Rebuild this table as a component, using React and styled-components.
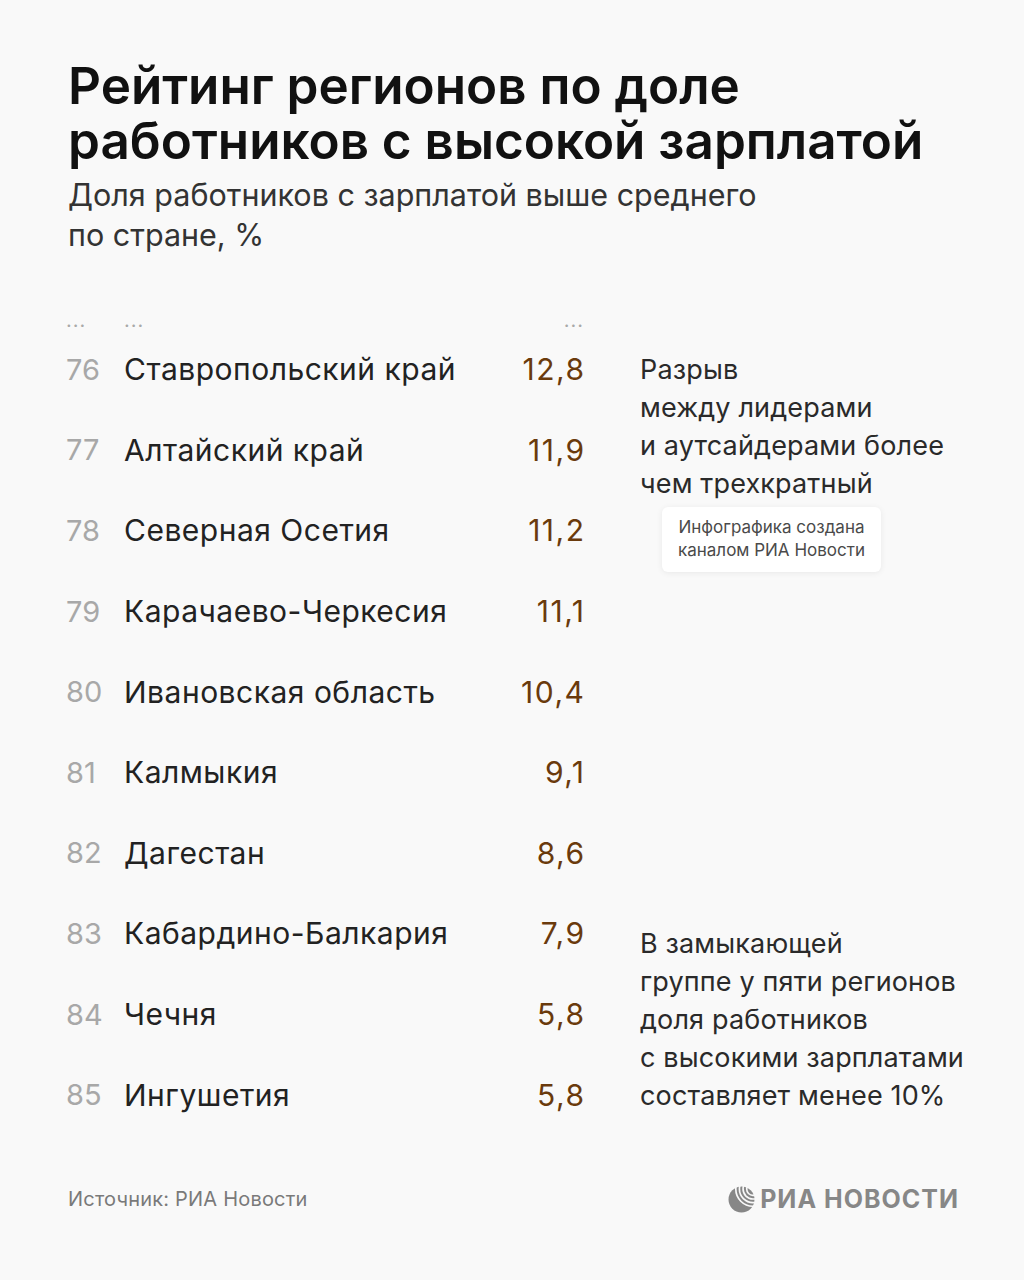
import styled, { createGlobalStyle } from 'styled-components';

const GlobalStyle = createGlobalStyle`
  html, body {
    margin: 0;
    padding: 0;
    background: #f9f9f9;
  }
  body {
    font-family: 'Inter', 'Noto Sans', sans-serif;
    -webkit-font-smoothing: antialiased;
  }
`;

const Page = styled.div`
  width: 1024px;
  height: 1280px;
  box-sizing: border-box;
  padding: 58px 66px 0 68px;
  background: #f9f9f9;
  display: flex;
  flex-direction: column;
`;

const Title = styled.h1`
  margin: 0;
  font-weight: 600;
  font-size: 51.2px;
  line-height: 55px;
  letter-spacing: 0;
  color: #111;
`;

const Subtitle = styled.p`
  margin: 7px 0 0;
  font-weight: 400;
  font-size: 30.5px;
  line-height: 40px;
  letter-spacing: 0;
  color: #333;
`;

const Board = styled.div`
  margin-top: 56px;
  margin-left: -2px;
  display: grid;
  grid-template-columns: 58px 400px 60px 56px 1fr;
  grid-template-rows: 18px repeat(10, 80.6px);
  align-items: center;
`;

const Dots = styled.span`
  grid-column: ${p => p.$col};
  justify-self: ${p => (p.$right ? 'end' : 'start')};
  font-size: 20px;
  line-height: 18px;
  color: #a9a9a9;
  letter-spacing: 1px;
`;

const Rank = styled.span`
  grid-column: 1;
  font-size: 29px;
  letter-spacing: 0;
  color: #a8a8a8;
`;

const Region = styled.span`
  grid-column: 2;
  font-size: 30px;
  letter-spacing: 0.5px;
  color: #222;
  white-space: nowrap;
`;

const Value = styled.span`
  grid-column: 3;
  justify-self: end;
  font-size: 30px;
  letter-spacing: 1.5px;
  margin-right: -1.5px;
  color: #6a3a0c;
`;

const Note = styled.div`
  grid-column: 5;
  grid-row: ${p => p.$rows};
  align-self: ${p => p.$align};
  margin-top: ${p => p.$top || 0}px;
  margin-bottom: ${p => p.$bottom || 0}px;
  display: flex;
  flex-direction: column;
  align-items: flex-start;
`;

const NoteText = styled.p`
  margin: 0;
  font-size: 27px;
  line-height: 38px;
  letter-spacing: 0.15px;
  color: #2a2a2a;
  white-space: nowrap;
`;

const Badge = styled.div`
  margin: 4px 0 0 22px;
  padding: 9px 16px 10px;
  background: #fff;
  border-radius: 6px;
  box-shadow: 0 1px 6px rgba(0, 0, 0, 0.07);
  font-size: 17px;
  line-height: 23px;
  color: #4a4a4a;
  text-align: center;
`;

const Footer = styled.div`
  margin-top: auto;
  margin-bottom: 66px;
  display: flex;
  align-items: center;
  justify-content: space-between;
`;

const Source = styled.span`
  font-size: 20px;
  letter-spacing: 0.2px;
  color: #7a7a7a;
`;

const Logo = styled.div`
  display: flex;
  align-items: center;
  gap: 5px;
  color: #878787;
`;

const LogoText = styled.span`
  font-weight: 700;
  font-size: 25px;
  letter-spacing: 1px;
  margin-right: -1px;
`;

const rows = [
  ['76', 'Ставропольский край', '12,8'],
  ['77', 'Алтайский край', '11,9'],
  ['78', 'Северная Осетия', '11,2'],
  ['79', 'Карачаево-Черкесия', '11,1'],
  ['80', 'Ивановская область', '10,4'],
  ['81', 'Калмыкия', '9,1'],
  ['82', 'Дагестан', '8,6'],
  ['83', 'Кабардино-Балкария', '7,9'],
  ['84', 'Чечня', '5,8'],
  ['85', 'Ингушетия', '5,8'],
];

const Globe = () => (
  <svg width="27" height="27" viewBox="0 0 26 26">
    <defs>
      <mask id="globe-cut">
        <rect width="26" height="26" fill="#fff" />
        {[6, 9.5, 13, 16.5].map(r => (
          <circle key={r} cx="24" cy="3" r={r} fill="none" stroke="#000" strokeWidth="1.6" />
        ))}
      </mask>
    </defs>
    <circle cx="13" cy="13" r="12.5" fill="currentColor" mask="url(#globe-cut)" />
  </svg>
);

export default function App() {
  return (
    <>
      <GlobalStyle />
      <Page>
        <Title>
          Рейтинг регионов по доле
          <br />
          работников с высокой зарплатой
        </Title>
        <Subtitle>
          Доля работников с зарплатой выше среднего
          <br />
          по стране, %
        </Subtitle>

        <Board>
          <Dots $col={1}>...</Dots>
          <Dots $col={2}>...</Dots>
          <Dots $col={3} $right>...</Dots>
          {rows.map(([rank, name, value]) => (
            <>
              <Rank key={rank + 'r'}>{rank}</Rank>
              <Region key={rank + 'n'}>{name}</Region>
              <Value key={rank + 'v'}>{value}</Value>
            </>
          ))}
          <Note $rows="2 / span 4" $align="start" $top={22}>
            <NoteText>
              Разрыв
              <br />
              между лидерами
              <br />
              и аутсайдерами более
              <br />
              чем трехкратный
            </NoteText>
            <Badge>
              Инфографика создана
              <br />
              каналом РИА Новости
            </Badge>
          </Note>
          <Note $rows="9 / span 3" $align="end" $bottom={20}>
            <NoteText>
              В замыкающей
              <br />
              группе у пяти регионов
              <br />
              доля работников
              <br />
              с высокими зарплатами
              <br />
              составляет менее 10%
            </NoteText>
          </Note>
        </Board>

        <Footer>
          <Source>Источник: РИА Новости</Source>
          <Logo>
            <Globe />
            <LogoText>РИА НОВОСТИ</LogoText>
          </Logo>
        </Footer>
      </Page>
    </>
  );
}
